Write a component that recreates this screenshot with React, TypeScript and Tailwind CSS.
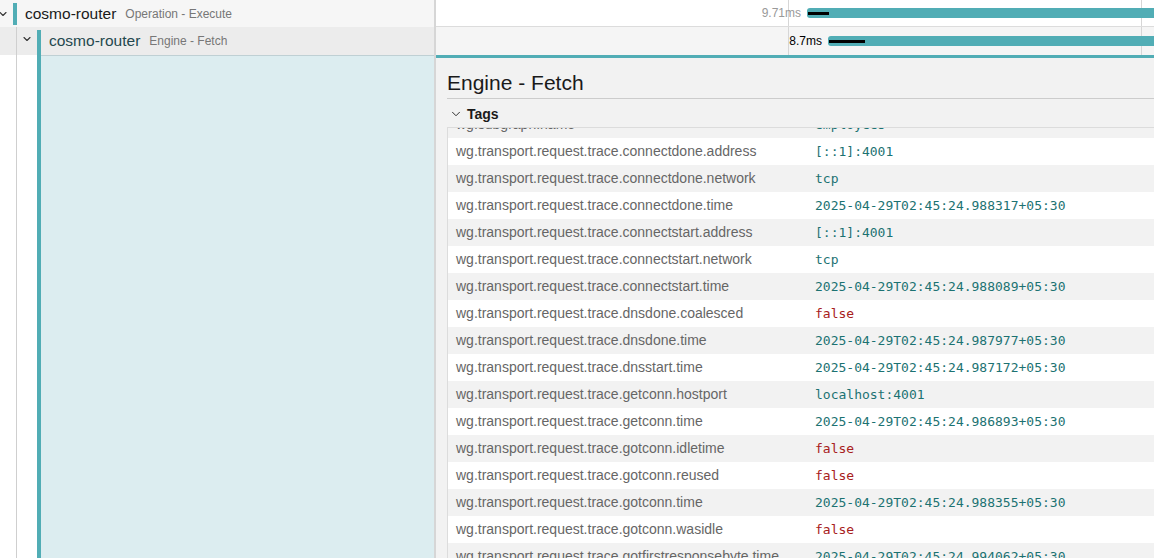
import { ChevronDown } from "lucide-react";

const TS = "2025-04-29T02:45:24.";

const tags: { key: string; value: string; kind: "str" | "bool" }[] = [
  { key: "connectdone.address", value: "[::1]:4001", kind: "str" },
  { key: "connectdone.network", value: "tcp", kind: "str" },
  { key: "connectdone.time", value: TS + "988317+05:30", kind: "str" },
  { key: "connectstart.address", value: "[::1]:4001", kind: "str" },
  { key: "connectstart.network", value: "tcp", kind: "str" },
  { key: "connectstart.time", value: TS + "988089+05:30", kind: "str" },
  { key: "dnsdone.coalesced", value: "false", kind: "bool" },
  { key: "dnsdone.time", value: TS + "987977+05:30", kind: "str" },
  { key: "dnsstart.time", value: TS + "987172+05:30", kind: "str" },
  { key: "getconn.hostport", value: "localhost:4001", kind: "str" },
  { key: "getconn.time", value: TS + "986893+05:30", kind: "str" },
  { key: "gotconn.idletime", value: "false", kind: "bool" },
  { key: "gotconn.reused", value: "false", kind: "bool" },
  { key: "gotconn.time", value: TS + "988355+05:30", kind: "str" },
  { key: "gotconn.wasidle", value: "false", kind: "bool" },
  { key: "gotfirstresponsebyte.time", value: TS + "994062+05:30", kind: "str" },
];

function TagRow({ k, v, kind, odd }: { k: string; v: string; kind: "str" | "bool"; odd: boolean }) {
  return (
    <div className={`grid h-[27px] grid-cols-[359px_1fr] items-center ${odd ? "bg-[#f2f2f2]" : "bg-white"}`}>
      <div className="whitespace-nowrap pl-2 text-[14px] text-[#666]">{k}</div>
      <div
        className={`whitespace-nowrap pl-2 font-['DejaVu_Sans_Mono',monospace] text-[13px] ${
          kind === "bool" ? "text-[#a82020]" : "text-[#1c7272]"
        }`}
      >
        {v}
      </div>
    </div>
  );
}

function Bar({ left, label, inner, dark }: { left: number; label: string; inner: number; dark: boolean }) {
  return (
    <>
      <span
        className={`absolute top-1/2 -translate-y-1/2 whitespace-nowrap text-[12px] ${dark ? "text-black" : "text-[#999]"}`}
        style={{ right: `calc(100% - ${left - 6}px)` }}
      >
        {label}
      </span>
      <div
        className="absolute top-1/2 flex h-[10px] -translate-y-1/2 items-center rounded-l-[3px] bg-[#51adb5]"
        style={{ left, right: 0 }}
      >
        <div className="ml-[1px] h-[3px] bg-black" style={{ width: inner }} />
      </div>
    </>
  );
}

function TimelineTicks() {
  return (
    <>
      <div className="absolute inset-y-0 left-[352px] w-px bg-[#d6d6d6]" />
      <div className="absolute inset-y-0 left-[705px] w-px bg-[#d6d6d6]" />
    </>
  );
}

export default function App() {
  return (
    <div className="flex h-[558px] w-[1154px] flex-col overflow-hidden bg-white font-['Liberation_Sans',Arial,sans-serif]">
      {/* row 1 */}
      <div className="flex h-[27px] shrink-0">
        <div className="flex w-[434px] items-center bg-[#f6f6f6]">
          <ChevronDown size={12} strokeWidth={2.2} className="-ml-[3px] text-[#333]" />
          <div className="ml-[4px] h-[22px] w-[4px] bg-[#51adb5]" />
          <span className="ml-[8px] text-[15.5px] text-[#1a1a1a]">cosmo-router</span>
          <span className="ml-[9px] text-[12px] text-[#777]">Operation - Execute</span>
        </div>
        <div className="w-[2px] bg-[#d6d6d6]" />
        <div className="relative flex-1 border-b border-[#dcdcdc] bg-white">
          <TimelineTicks />
          <Bar left={371} label="9.71ms" inner={21} dark={false} />
        </div>
      </div>

      {/* row 2 */}
      <div className="flex h-[28px] shrink-0">
        <div className="flex w-[434px] bg-[#ececec]">
          <div className="w-[17px] border-r border-[#cfcfcf]" />
          <div className="flex w-[20px] items-center justify-center">
            <ChevronDown size={12} strokeWidth={2.2} className="-mt-[4px] text-[#333]" />
          </div>
          <div className="mt-[3px] w-[4px] bg-[#51adb5]" />
          <div className="flex items-center">
            <span className="ml-[8px] text-[15.5px] text-[#24484e]">cosmo-router</span>
            <span className="ml-[9px] text-[12px] text-[#777]">Engine - Fetch</span>
          </div>
        </div>
        <div className="w-[2px] bg-[#d6d6d6]" />
        <div className="relative flex-1 bg-[#f5f5f5]">
          <TimelineTicks />
          <Bar left={392} label="8.7ms" inner={36} dark={true} />
        </div>
      </div>

      {/* detail row */}
      <div className="flex min-h-0 flex-1">
        <div className="flex w-[434px]">
          <div className="w-[17px] border-r border-[#cfcfcf]" />
          <div className="w-[20px]" />
          <div className="w-[4px] bg-[#51adb5]" />
          <div className="flex-1 border-t border-[#bfd0d4] bg-[#dcedf0]" />
        </div>
        <div className="w-[2px] bg-[#d6d6d6]" />
        <div className="flex min-w-0 flex-1 flex-col border-t-[3px] border-[#51adb5] bg-[#f2f2f2] pl-[11px]">
          <div className="border-b border-[#cccccc] pb-[1px] pt-[11px]">
            <h2 className="h-[28px] text-[21px] leading-[28px] text-[#1a1a1a]">Engine - Fetch</h2>
          </div>
          <div className="flex h-[28px] items-center pt-[2px]">
            <ChevronDown size={14} strokeWidth={1.6} className="ml-[2px] text-[#222]" />
            <span className="ml-[4px] text-[14px] font-bold text-[#1a1a1a]">Tags</span>
          </div>
          <div className="min-h-0 flex-1 overflow-hidden border-l border-t border-[#dcdcdc]">
            <div className="h-[10px] overflow-hidden">
              <div className="-mt-[17px]">
                <TagRow k="wg.subgraph.name" v="employees" kind="str" odd={true} />
              </div>
            </div>
            {tags.map((t, i) => (
              <TagRow
                key={t.key}
                k={"wg.transport.request.trace." + t.key}
                v={t.value}
                kind={t.kind}
                odd={i % 2 === 1}
              />
            ))}
          </div>
        </div>
      </div>
    </div>
  );
}
